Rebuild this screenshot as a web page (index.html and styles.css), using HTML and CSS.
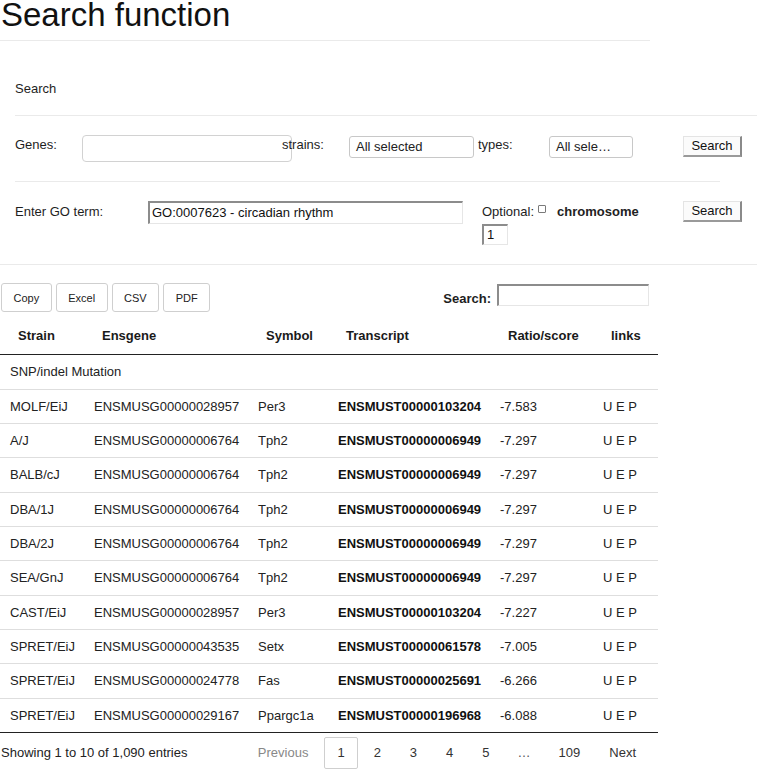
FILE: index.html
```html
<!DOCTYPE html>
<html>
<head>
<meta charset="utf-8">
<title>Search function</title>
<link rel="stylesheet" href="styles.css">
</head>
<body>
<h1 class="title">Search function</h1>
<div class="rule rule-title"></div>
<div class="section-label">Search</div>
<div class="rule rule-a"></div>

<div class="form-row row-genes">
  <span class="lbl lbl-genes">Genes:</span>
  <span class="textbox genes-box"></span>
  <span class="lbl lbl-strains">strains:</span>
  <span class="selectbox sel-strains">All selected</span>
  <span class="lbl lbl-types">types:</span>
  <span class="selectbox sel-types">All sele…</span>
  <button class="btn-classic btn-row1">Search</button>
</div>
<div class="rule rule-b"></div>

<div class="form-row row-go">
  <span class="lbl lbl-go">Enter GO term:</span>
  <span class="inset go-input">GO:0007623 - circadian rhythm</span>
  <div class="optional">
    <div class="opt-line"><span>Optional:</span><span class="checkbox"></span><b class="chrom">chromosome</b></div>
    <span class="inset chrom-input">1</span>
  </div>
  <button class="btn-classic btn-row2">Search</button>
</div>
<div class="rule rule-c"></div>

<div class="toolbar">
  <div class="dt-buttons">
    <button class="dt-btn">Copy</button>
    <button class="dt-btn">Excel</button>
    <button class="dt-btn">CSV</button>
    <button class="dt-btn">PDF</button>
  </div>
  <div class="filter"><b class="filter-label">Search:</b><span class="inset filter-input"></span></div>
</div>

<table class="data">
  <colgroup>
    <col class="c1"><col class="c2"><col class="c3"><col class="c4"><col class="c5"><col class="c6">
  </colgroup>
  <thead>
    <tr><th>Strain</th><th>Ensgene</th><th>Symbol</th><th>Transcript</th><th>Ratio/score</th><th>links</th></tr>
  </thead>
  <tbody>
    <tr class="group"><td colspan="6">SNP/indel Mutation</td></tr>
    <tr><td>MOLF/EiJ</td><td>ENSMUSG00000028957</td><td>Per3</td><td class="b">ENSMUST00000103204</td><td>-7.583</td><td>U E P</td></tr>
    <tr><td>A/J</td><td>ENSMUSG00000006764</td><td>Tph2</td><td class="b">ENSMUST00000006949</td><td>-7.297</td><td>U E P</td></tr>
    <tr><td>BALB/cJ</td><td>ENSMUSG00000006764</td><td>Tph2</td><td class="b">ENSMUST00000006949</td><td>-7.297</td><td>U E P</td></tr>
    <tr><td>DBA/1J</td><td>ENSMUSG00000006764</td><td>Tph2</td><td class="b">ENSMUST00000006949</td><td>-7.297</td><td>U E P</td></tr>
    <tr><td>DBA/2J</td><td>ENSMUSG00000006764</td><td>Tph2</td><td class="b">ENSMUST00000006949</td><td>-7.297</td><td>U E P</td></tr>
    <tr><td>SEA/GnJ</td><td>ENSMUSG00000006764</td><td>Tph2</td><td class="b">ENSMUST00000006949</td><td>-7.297</td><td>U E P</td></tr>
    <tr><td>CAST/EiJ</td><td>ENSMUSG00000028957</td><td>Per3</td><td class="b">ENSMUST00000103204</td><td>-7.227</td><td>U E P</td></tr>
    <tr><td>SPRET/EiJ</td><td>ENSMUSG00000043535</td><td>Setx</td><td class="b">ENSMUST00000061578</td><td>-7.005</td><td>U E P</td></tr>
    <tr><td>SPRET/EiJ</td><td>ENSMUSG00000024778</td><td>Fas</td><td class="b">ENSMUST00000025691</td><td>-6.266</td><td>U E P</td></tr>
    <tr><td>SPRET/EiJ</td><td>ENSMUSG00000029167</td><td>Ppargc1a</td><td class="b">ENSMUST00000196968</td><td>-6.088</td><td>U E P</td></tr>
  </tbody>
</table>

<div class="footer">
  <div class="info">Showing 1 to 10 of 1,090 entries</div>
  <div class="paginate">
    <span class="pg disabled">Previous</span>
    <span class="pg current">1</span>
    <span class="pg">2</span>
    <span class="pg">3</span>
    <span class="pg">4</span>
    <span class="pg">5</span>
    <span class="ellipsis">…</span>
    <span class="pg">109</span>
    <span class="pg">Next</span>
  </div>
</div>
</body>
</html>
```

FILE: styles.css
```css
* { box-sizing: border-box; }

html, body {
  margin: 0;
  padding: 0;
  background: #fff;
}

body {
  font-family: "Liberation Sans", Arial, sans-serif;
  font-size: 13px;
  line-height: 15px;
  color: #1e1e1e;
  width: 757px;
}

.title {
  margin: 0;
  padding-left: 1px;
  font-size: 33px;
  line-height: 30px;
  font-weight: normal;
  color: #111;
}

.rule {
  height: 0;
  border-top: 1px solid #eaeaea;
}
.rule-title { margin-top: 10px; width: 650px; }
.rule-a { margin-top: 19px; margin-left: 15px; }
.rule-b { margin-left: 15px; width: 705px; }
.rule-c { width: 757px; }

.section-label {
  margin-top: 40px;
  padding-left: 15px;
}

.form-row {
  display: flex;
  align-items: flex-start;
  padding-left: 15px;
}
.row-genes { padding-top: 19px; padding-bottom: 19px; }
.row-go { padding-top: 19px; padding-bottom: 19px; }

.lbl { margin-top: 2px; flex: none; }
.lbl-genes { width: 67px; }
.lbl-strains { width: 67px; margin-left: -10px; position: relative; }
.lbl-types { width: 71px; margin-left: 4px; }
.lbl-go { width: 133px; margin-top: 3px; }

.textbox {
  display: block;
  flex: none;
  border: 1px solid #d2d2d2;
  border-radius: 4px;
  background: #fff;
}
.genes-box { width: 210px; height: 27px; }

.selectbox {
  display: block;
  flex: none;
  margin-top: 1px;
  height: 22px;
  border: 1px solid #c8c8c8;
  border-radius: 3px;
  padding-left: 6px;
  line-height: 20px;
  white-space: nowrap;
  overflow: hidden;
  color: #222;
  background: #fff;
}
.sel-strains { width: 125px; }
.sel-types { width: 84px; }

.btn-classic {
  flex: none;
  width: 59px;
  height: 21px;
  padding: 0;
  font-family: "Liberation Sans", Arial, sans-serif;
  font-size: 13px;
  line-height: 18px;
  color: #111;
  background: #fbfbfb;
  border-style: solid;
  border-width: 1px 2px 2px 1px;
  border-color: #e4e4e4 #8a8a8a #9a9a9a #e4e4e4;
}
.btn-row1 { margin-left: 50px; margin-top: 1px; }
.btn-row2 { margin-left: 0; margin-top: 0; }

.inset {
  display: block;
  flex: none;
  background: #fff;
  border-style: solid;
  border-width: 2px 1px 1px 2px;
  border-color: #8c8c8c #e6e6e6 #e6e6e6 #8c8c8c;
  white-space: nowrap;
  overflow: hidden;
}
.go-input {
  width: 315px;
  height: 23px;
  padding-left: 2px;
  line-height: 20px;
  color: #111;
}

.optional {
  width: 201px;
  margin-left: 19px;
  flex: none;
}
.opt-line {
  display: flex;
  align-items: flex-start;
  margin-top: 3px;
  color: #222;
}
.checkbox {
  display: block;
  width: 8px;
  height: 8px;
  border: 1px solid #7a7a7a;
  border-radius: 1px;
  margin-left: 4px;
  margin-top: 1px;
  background: #fff;
}
.chrom {
  margin-left: 11px;
  font-weight: bold;
}
.chrom-input {
  margin-top: 5px;
  width: 26px;
  height: 21px;
  padding-left: 3px;
  line-height: 18px;
  color: #111;
}

.toolbar {
  display: flex;
  justify-content: space-between;
  align-items: flex-start;
  width: 658px;
  padding-top: 18px;
  padding-right: 9px;
}
.dt-buttons {
  display: flex;
  gap: 4px;
  margin-left: 1px;
}
.dt-btn {
  height: 29px;
  padding: 0 11.5px;
  font-family: "Liberation Sans", Arial, sans-serif;
  font-size: 11px;
  color: #222;
  background: #fff;
  border: 1px solid #cfcfcf;
  border-radius: 3px;
}
.filter {
  display: flex;
  align-items: flex-start;
}
.filter-label {
  margin-top: 8px;
  margin-right: 6px;
  font-weight: bold;
}
.filter-input {
  margin-top: 1px;
  width: 152px;
  height: 22px;
}

.data {
  margin-top: 5px;
  width: 658px;
  table-layout: fixed;
  border-collapse: separate;
  border-spacing: 0;
  border-bottom: 1px solid #222;
  font-size: 13px;
  line-height: 17.33px;
}
.c1 { width: 84px; }
.c2 { width: 164px; }
.c3 { width: 80px; }
.c4 { width: 162px; }
.c5 { width: 103px; }
.c6 { width: 65px; }

.data th {
  text-align: left;
  font-weight: bold;
  padding: 10px 18px;
  border-bottom: 1px solid #222;
  color: #1a1a1a;
  white-space: nowrap;
}
.data td {
  padding: 8px 10px;
  border-top: 1px solid #dedede;
  white-space: nowrap;
  color: #222;
}
.data tbody tr:first-child td { border-top: none; }
.data td.b { font-weight: bold; color: #111; }

.footer {
  display: flex;
  justify-content: space-between;
  align-items: center;
  width: 658px;
  padding-top: 4px;
  padding-right: 9px;
}
.info {
  margin-left: 1px;
  color: #222;
}
.paginate {
  display: flex;
  align-items: center;
}
.pg {
  display: block;
  height: 32px;
  line-height: 30px;
  padding: 0 12px;
  margin-left: 3px;
  border: 1px solid transparent;
  border-radius: 2px;
  color: #333;
}
.pg.disabled { color: #888; }
.pg.current {
  border-color: #cfcfcf;
  background: #fff;
  color: #333;
}
.ellipsis {
  display: block;
  padding: 0 12px;
  margin-left: 3px;
  color: #555;
}
```
